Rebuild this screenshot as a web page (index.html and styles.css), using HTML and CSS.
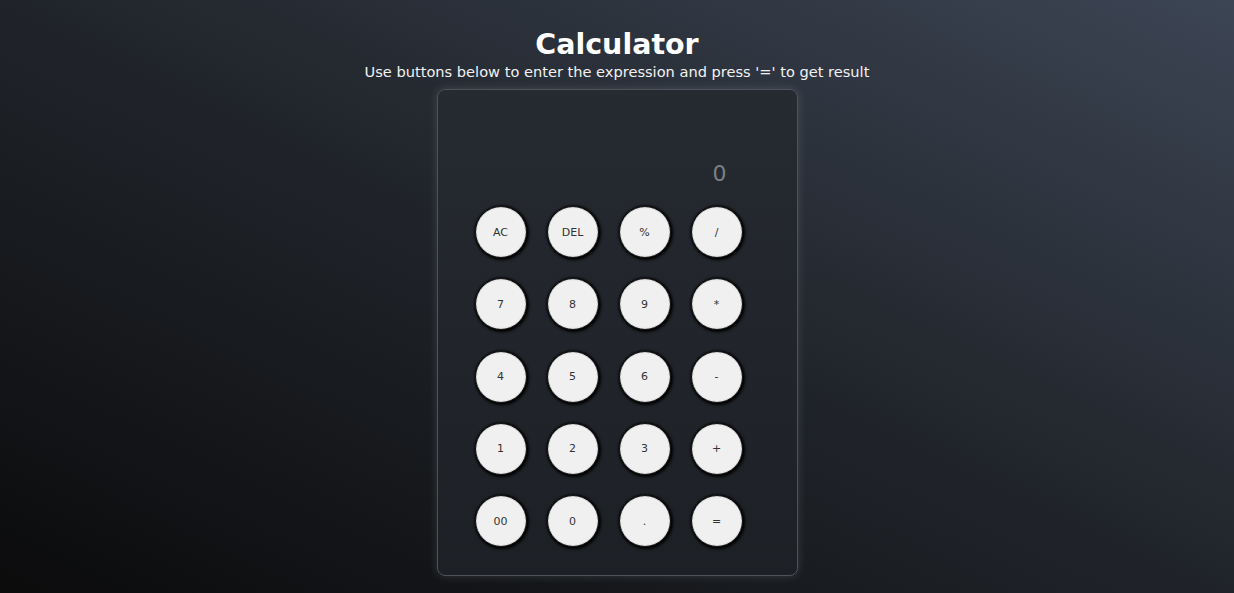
FILE: index.html
```html
<!DOCTYPE html>
<html>
<head>
<meta charset="utf-8">
<link rel="stylesheet" href="styles.css">
</head>
<body>
<main class="page">
  <h1 class="title">Calculator</h1>
  <p class="subtitle">Use buttons below to enter the expression and press '=' to get result</p>
  <section class="calc">
    <div class="display">0</div>
    <div class="keys">
      <button class="key">AC</button>
      <button class="key">DEL</button>
      <button class="key">%</button>
      <button class="key">/</button>
      <button class="key">7</button>
      <button class="key">8</button>
      <button class="key">9</button>
      <button class="key">*</button>
      <button class="key">4</button>
      <button class="key">5</button>
      <button class="key">6</button>
      <button class="key">-</button>
      <button class="key">1</button>
      <button class="key">2</button>
      <button class="key">3</button>
      <button class="key">+</button>
      <button class="key">00</button>
      <button class="key">0</button>
      <button class="key">.</button>
      <button class="key">=</button>
    </div>
  </section>
</main>
</body>
</html>
```
FILE: styles.css
```css
html, body {
  margin: 0;
  height: 100%;
}
body {
  background: linear-gradient(to right top, #0b0b0c 0%, #20242a 50%, #3c4554 100%);
  font-family: "DejaVu Sans", Verdana, sans-serif;
  color: #fff;
  overflow: hidden;
}
.page {
  display: flex;
  flex-direction: column;
  align-items: center;
  padding-top: 28px;
}
.title {
  margin: 0;
  font-size: 28.5px;
  font-weight: bold;
  line-height: 34px;
}
.subtitle {
  margin: 0;
  font-size: 14.6px;
  line-height: 20px;
  color: #f2f2f2;
}
.calc {
  margin-top: 7px;
  width: 361px;
  height: 487px;
  box-sizing: border-box;
  border: 1px solid #4e535b;
  border-radius: 8px;
  background: linear-gradient(to bottom, #262a31, #1d2025);
  box-shadow: 0 0 10px rgba(200, 205, 215, 0.18);
  padding: 0 0 0 37px;
}
.display {
  height: 116px;
  box-sizing: border-box;
  padding: 72px 70px 0 0;
  text-align: right;
  font-size: 22px;
  line-height: 24px;
  color: #7b7f86;
}
.keys {
  display: grid;
  grid-template-columns: repeat(4, 52px);
  grid-auto-rows: 52px;
  column-gap: 20px;
  row-gap: 20.25px;
}
.key {
  width: 52px;
  height: 52px;
  border-radius: 50%;
  border: 1px solid #111;
  background: #f0f0f0;
  box-shadow: 1px 1px 3px 1px #000, 0 0 2px #000, inset 0 0 1px #555;
  font-family: "DejaVu Sans", Verdana, sans-serif;
  font-size: 11px;
  color: #333;
  padding: 0;
}
```
